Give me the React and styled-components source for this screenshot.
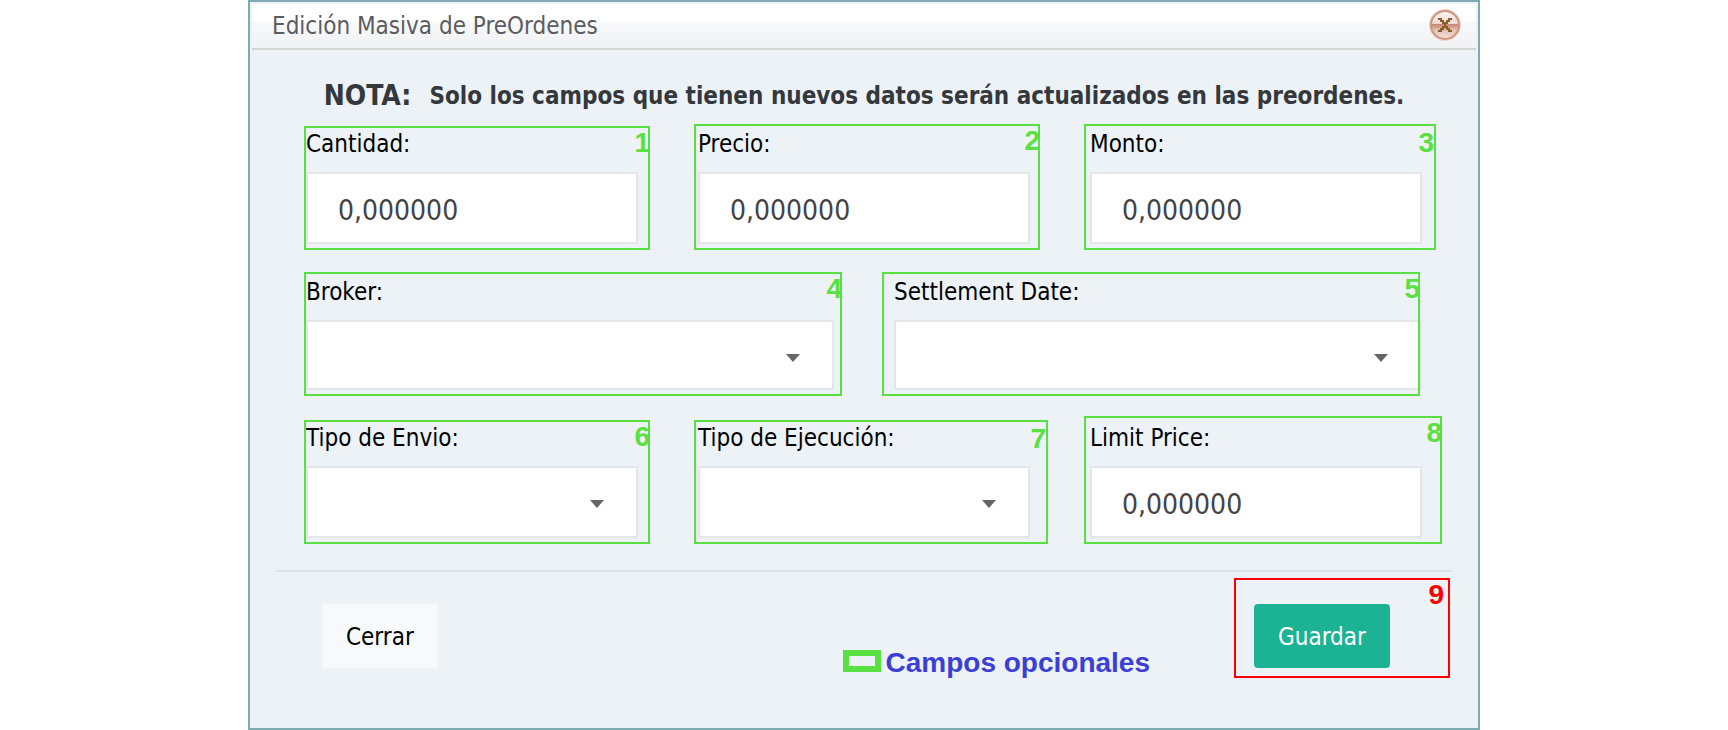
import React from 'react';
import styled, { createGlobalStyle } from 'styled-components';

const uiFont = '"DejaVu Sans Condensed", "Noto Sans", sans-serif';
const noteFont = '"Liberation Sans", Arial, sans-serif';
const green = '#5ae043';
const line = '#e5e6e9';

const GlobalStyle = createGlobalStyle`
  *, *::before, *::after { box-sizing: border-box; }
  body { margin: 0; background: #fff; font-family: ${uiFont}; }
`;

const Dialog = styled.section`
  max-width: 1232px;
  margin: 0 auto;
  padding: 2px 2px 50px;
  border: 2px solid #7dabb0;
  background: #ecf2f5;
`;

const Header = styled.header`
  display: flex;
  align-items: center;
  justify-content: space-between;
  height: 46px;
  padding: 0 14px 0 20px;
  border-bottom: 2px solid #d4d6d6;
  background: linear-gradient(#fff 0 18px, #f8f9fa 18px, #f0f1f3 100%);
`;

const Title = styled.h1`
  margin: 0;
  font-size: 24px;
  line-height: 32px;
  font-weight: 400;
  color: #5c5c60;
`;

const CloseButton = styled.button`
  display: flex;
  padding: 0 0 2px;
  border: 0;
  background: none;
  cursor: pointer;
`;

const Body = styled.form`
  padding: 30px 24px 0;
`;

const Notice = styled.p`
  display: flex;
  align-items: center;
  justify-content: center;
  gap: 18px;
  margin: 0 0 14px;
  font-size: 24px;
  line-height: 32px;
  font-weight: 700;
  color: #34383d;
`;

const NoticeLead = styled.strong`
  font-size: 28px;
`;

const Fields = styled.div`
  display: flex;
  flex-direction: column;
  gap: 30px;
  padding: 0 30px 32px;
  border-bottom: 2px solid #dde2e4;
`;

const Row = styled.div`
  display: grid;
  grid-template-columns: repeat(${p => p.$columns}, minmax(0, 1fr));
  gap: 60px;
`;

const FieldBox = styled.div`
  position: relative;
`;

const Label = styled.label`
  display: block;
  padding-bottom: 10px;
  font-size: 24px;
  line-height: 36px;
  color: #000;
`;

const TextInput = styled.input`
  display: block;
  width: 100%;
  height: 72px;
  padding: 4px 30px 0;
  border: 2px solid ${line};
  border-radius: 0;
  background: #fff;
  font-family: ${uiFont};
  font-size: 28px;
  color: #444;
`;

const SelectBox = styled.div`
  position: relative;
`;

const Select = styled.select`
  display: block;
  width: 100%;
  height: ${p => (p.$short ? 70 : 72)}px;
  padding: 0 60px 0 30px;
  border: 2px solid ${line};
  border-radius: 0;
  background: #fff;
  appearance: none;
  font-family: ${uiFont};
  font-size: 28px;
  color: #444;
`;

const Arrow = styled.svg`
  position: absolute;
  top: 34px;
  right: 34px;
  pointer-events: none;
`;

/* Annotation outline that lies over a field. */
const Outline = styled.div`
  position: absolute;
  inset: ${p => p.$inset};
  border: 2px solid ${green};
  pointer-events: none;
`;

const Badge = styled.span`
  position: absolute;
  top: ${p => (p.$inner ? 2 : 0)}px;
  right: ${p => (p.$inner ? 0 : -2)}px;
  font-family: ${noteFont};
  font-size: 28px;
  line-height: 30px;
  font-weight: 700;
  color: ${green};
`;

const Footer = styled.footer`
  display: flex;
  align-items: flex-end;
  padding: 6px 2px 0 46px;
`;

const Button = styled.button`
  height: 64px;
  padding: 2px 24px 0;
  border: 0;
  border-radius: 4px;
  background: ${p => (p.$primary ? '#1bb394' : '#f7f9fb')};
  color: ${p => (p.$primary ? '#fff' : '#000')};
  font-family: ${uiFont};
  font-size: 24px;
  line-height: 32px;
  cursor: pointer;
`;

const CancelArea = styled.div`
  padding-bottom: 10px;
`;

const Legend = styled.div`
  display: flex;
  align-items: flex-end;
  gap: 4px;
  margin: 0 84px 0 auto;
  font-family: ${noteFont};
  font-size: 28px;
  line-height: 30px;
  font-weight: 700;
  color: #3c3fd6;
`;

const Swatch = styled.span`
  width: 38px;
  height: 22px;
  margin-bottom: 6px;
  border: 6px solid ${green};
`;

const SaveArea = styled.div`
  display: flex;
  justify-content: space-between;
  width: 216px;
  padding: 24px 4px 8px 18px;
  border: 2px solid #f00;
`;

const SaveNumber = styled.span`
  margin-top: -24px;
  font-family: ${noteFont};
  font-size: 28px;
  line-height: 30px;
  font-weight: 700;
  color: #f00;
`;

const rows = [
  [
    { id: 'cantidad', label: 'Cantidad:', value: '0,000000', inset: '0 -12px -6px -2px' },
    { id: 'precio', label: 'Precio:', value: '0,000000', inset: '-2px -10px -6px -4px' },
    { id: 'monto', label: 'Monto:', value: '0,000000', inset: '-2px -14px -6px -6px', inner: true },
  ],
  [
    { id: 'broker', label: 'Broker:', inset: '-2px -8px -6px -2px' },
    { id: 'settlement', label: 'Settlement Date:', inset: '-2px 2px -6px -12px' },
  ],
  [
    { id: 'envio', label: 'Tipo de Envio:', inset: '0 -12px -6px -2px' },
    { id: 'ejecucion', label: 'Tipo de Ejecución:', inset: '0 -18px -6px -4px', inner: true },
    { id: 'limit', label: 'Limit Price:', value: '0,000000', inset: '-4px -20px -6px -6px' },
  ],
];

function Field({ field, number, short }) {
  return (
    <FieldBox>
      <Label htmlFor={field.id}>{field.label}</Label>
      {field.value ? (
        <TextInput id={field.id} type="text" inputMode="decimal" defaultValue={field.value} />
      ) : (
        <SelectBox>
          <Select id={field.id} $short={short} defaultValue="">
            <option value="" />
          </Select>
          <Arrow width="14" height="8" viewBox="0 0 14 8" aria-hidden="true">
            <path d="M0 0h14L7 8z" fill="#666" />
          </Arrow>
        </SelectBox>
      )}
      <Outline $inset={field.inset}>
        <Badge $inner={field.inner}>{number}</Badge>
      </Outline>
    </FieldBox>
  );
}

function CloseIcon() {
  return (
    <svg width="34" height="34" viewBox="0 0 34 34" aria-hidden="true">
      <defs>
        <linearGradient id="glass" x1="0" y1="0" x2="0" y2="1">
          <stop offset="0" stopColor="#fbf3ef" />
          <stop offset="0.46" stopColor="#eed8d0" />
          <stop offset="0.48" stopColor="#cb8a75" />
          <stop offset="0.6" stopColor="#d8a392" />
          <stop offset="0.68" stopColor="#e3bfb2" />
          <stop offset="1" stopColor="#f1dfd6" />
        </linearGradient>
      </defs>
      <circle cx="17" cy="17" r="16" fill="#efd5cb" />
      <circle cx="17" cy="17" r="13" fill="url(#glass)" />
      <circle cx="17" cy="17" r="14" fill="none" stroke="#cf937f" strokeWidth="2" />
      <path
        d="M10 10h4v2h2v2h2v-2h2v-2h4v2h-2v2h-2v2h-2v2h2v2h2v2h2v2h-4v-2h-2v-2h-2v2h-2v2h-4v-2h2v-2h2v-2h2v-2h-2v-2h-2v-2h-2z"
        fill="#86602a"
      />
    </svg>
  );
}

export default function App() {
  let number = 0;
  return (
    <>
      <GlobalStyle />
      <Dialog role="dialog" aria-labelledby="dialog-title">
        <Header>
          <Title id="dialog-title">Edición Masiva de PreOrdenes</Title>
          <CloseButton type="button" aria-label="Cerrar ventana">
            <CloseIcon />
          </CloseButton>
        </Header>
        <Body onSubmit={e => e.preventDefault()}>
          <Notice>
            <NoticeLead>NOTA:</NoticeLead>
            <span>Solo los campos que tienen nuevos datos serán actualizados en las preordenes.</span>
          </Notice>
          <Fields>
            {rows.map((fields, index) => (
              <Row key={index} $columns={fields.length}>
                {fields.map(field => {
                  number += 1;
                  return <Field key={field.id} field={field} number={number} short={fields.length === 2} />;
                })}
              </Row>
            ))}
          </Fields>
          <Footer>
            <CancelArea>
              <Button type="button">Cerrar</Button>
            </CancelArea>
            <Legend>
              <Swatch />
              <span>Campos opcionales</span>
            </Legend>
            <SaveArea>
              <Button type="submit" $primary>Guardar</Button>
              <SaveNumber>9</SaveNumber>
            </SaveArea>
          </Footer>
        </Body>
      </Dialog>
    </>
  );
}
